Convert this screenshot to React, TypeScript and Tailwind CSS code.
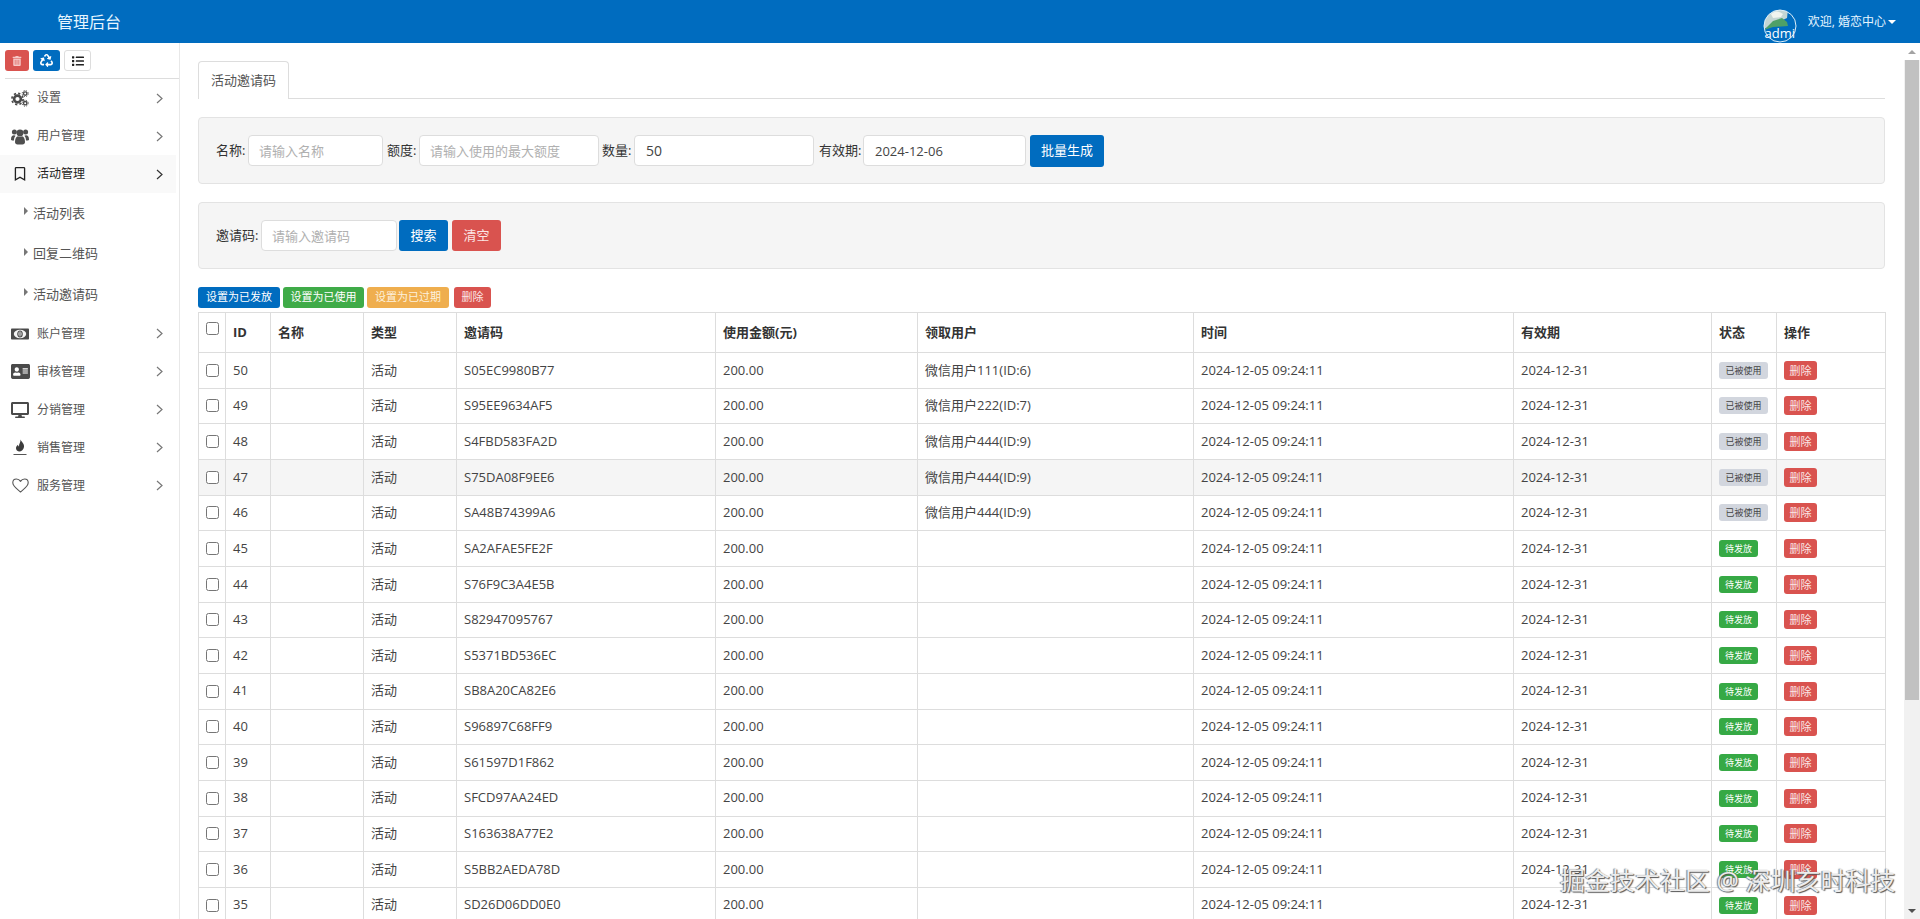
import React from "react";
import { FaRegBookmark, FaAddressCard, FaDesktop, FaTrashAlt, FaRecycle, FaList } from "react-icons/fa";

const FONT = "font-['Open_Sans','Noto_Sans_CJK_SC',sans-serif]";

type Row = [number, string, string];
const rows: Row[] = [
  [50, "S05EC9980B77", "微信用户111(ID:6)"],
  [49, "S95EE9634AF5", "微信用户222(ID:7)"],
  [48, "S4FBD583FA2D", "微信用户444(ID:9)"],
  [47, "S75DA08F9EE6", "微信用户444(ID:9)"],
  [46, "SA48B74399A6", "微信用户444(ID:9)"],
  [45, "SA2AFAE5FE2F", ""],
  [44, "S76F9C3A4E5B", ""],
  [43, "S82947095767", ""],
  [42, "S5371BD536EC", ""],
  [41, "SB8A20CA82E6", ""],
  [40, "S96897C68FF9", ""],
  [39, "S61597D1F862", ""],
  [38, "SFCD97AA24ED", ""],
  [37, "S163638A77E2", ""],
  [36, "S5BB2AEDA78D", ""],
  [35, "SD26D06DD0E0", ""],
];

function Gears() {
  return (
    <svg width="18" height="17" viewBox="0 0 18 17" fill="none" stroke="#4a4a4a">
      <circle cx="6.5" cy="9" r="3.4" strokeWidth="2.6" />
      <circle cx="6.5" cy="9" r="5.6" strokeWidth="1.7" strokeDasharray="2.2 2.2" />
      <circle cx="14.2" cy="3.6" r="1.7" strokeWidth="1.4" />
      <circle cx="14.2" cy="3.6" r="3" strokeWidth="1" strokeDasharray="1.2 1.2" />
      <circle cx="14.2" cy="13.2" r="1.7" strokeWidth="1.4" />
      <circle cx="14.2" cy="13.2" r="3" strokeWidth="1" strokeDasharray="1.2 1.2" />
    </svg>
  );
}

function Users() {
  return (
    <svg width="18" height="17" viewBox="0 0 18 17" fill="#4f4f4f">
      <circle cx="3.4" cy="4" r="2.5" />
      <circle cx="14.6" cy="4" r="2.5" />
      <circle cx="9" cy="5" r="3.4" />
      <path d="M0 11.5C0 8.5 1.2 7.2 3 7.2c.6 0 1.2.2 1.6.6C3.5 9 3 10.5 3 12.4H1.2C.5 12.4 0 12.1 0 11.5Z" />
      <path d="M18 11.5C18 8.5 16.8 7.2 15 7.2c-.6 0-1.2.2-1.6.6C14.5 9 15 10.5 15 12.4h1.8c.7 0 1.2-.3 1.2-.9Z" />
      <path d="M4 14c0-3.5 1.2-5.6 3-5.8.6.4 1.2.6 2 .6s1.400-.2 2-.6c1.800.2 3 2.300 3 5.800 0 1.500-1 2.500-2.500 2.500h-5C5 16.500 4 15.500 4 14Z" />
    </svg>
  );
}

function Money() {
  return (
    <svg width="18" height="12" viewBox="0 0 18 12">
      <rect x="0" y="0.5" width="18" height="11" rx="0.8" fill="#4a4a4a" />
      <ellipse cx="9" cy="6" rx="6.2" ry="4.2" fill="#f4f4f4" />
      <ellipse cx="9" cy="6" rx="2.2" ry="3" fill="none" stroke="#4a4a4a" strokeWidth="1.2" />
      <rect x="8.500" y="4" width="1" height="4" fill="#4a4a4a" />
    </svg>
  );
}

function Flame() {
  return (
    <svg width="14" height="17" viewBox="0 0 14 17" fill="#3c3c3c">
      <path d="M7.500 0.500C8.500 3 11.500 4.500 11 8c-.4 2.800-2.600 4.600-5 4.500C4 12.400 2.800 10.500 3 8.800c.2-1.500 1.300-2.300 2-3 .2 1 .6 1.500 1 1.700C5.600 5 7.800 3.500 7.500 .5Z" />
      <rect x="0.500" y="15" width="13" height="1" fill="#555" />
    </svg>
  );
}

function Heart() {
  return (
    <svg width="17" height="15" viewBox="0 0 17 15" fill="none" stroke="#555" strokeWidth="1.1" strokeLinejoin="round">
      <path d="M8.500 14C5 11 .8 8.400 .8 4.800.8 2.400 2.500 1 4.400 1c1.700 0 3.200.9 4.100 2.400C9.400 1.900 10.900 1 12.600 1c1.900 0 3.600 1.400 3.600 3.800C16.200 8.400 12 11 8.500 14Z" />
    </svg>
  );
}

function Chevron({ dark }: { dark?: boolean }) {
  return (
    <svg width="7" height="11" viewBox="0 0 7 11" fill="none" stroke={dark ? "#333" : "#777"} strokeWidth="1.200" className="mr-[13px]">
      <polyline points="1,1 6,5.500 1,10" />
    </svg>
  );
}

function MenuItem({ icon, label, active }: { icon: React.ReactNode; label: string; active?: boolean }) {
  return (
    <div className={`flex h-[38px] w-[176px] items-center ${active ? "bg-[#f9f9f9] text-[#222]" : "text-[#555]"}`}>
      <span className="flex w-[37px] justify-center pl-[3px] text-[#4a4a4a]">{icon}</span>
      <span className="flex-1 text-[12px]">{label}</span>
      <Chevron dark={active} />
    </div>
  );
}

function SubItem({ label }: { label: string }) {
  return (
    <div className="flex h-[40.5px] items-center pl-[24px] text-[13px] text-[#555]">
      <span className="mr-[5px] mt-[-4px] h-0 w-0 border-y-[4px] border-l-[4px] border-y-transparent border-l-[#777]" />
      {label}
    </div>
  );
}

function Field({ className, placeholder, value }: { className: string; placeholder?: string; value?: string }) {
  return (
    <input
      readOnly
      placeholder={placeholder}
      value={value}
      className={`h-[31px] rounded-[4px] border border-[#ddd] bg-white px-[10px] text-[13px] text-[#444] placeholder:text-[#b0b0b0] ${className}`}
    />
  );
}

export default function App() {
  return (
    <div className={`relative flex h-[919px] flex-col overflow-hidden bg-white text-[#333] ${FONT}`}>
      <header className="flex h-[43px] shrink-0 items-center bg-[#006cbf] pl-[57px] pr-[24px] text-white">
        <span className="text-[16px] leading-none text-[#e6f6ff]">管理后台</span>
        <div className="ml-auto flex items-center">
          <svg width="34" height="34" viewBox="0 0 34 34" className="mt-[9px]">
            <defs>
              <clipPath id="av"><circle cx="17" cy="17" r="16" /></clipPath>
            </defs>
            <g clipPath="url(#av)">
              <rect width="34" height="34" fill="#006cbf" />
              <path d="M1 20 L24 9 L25 0 L0 0 Z" fill="#c4d6d4" />
              <path d="M1 21 L10 12 L19 9 L24 13 L25 17 L10 18 Z" fill="#4fa068" />
              <path d="M8 5 Q13 0 20 5 L18 8 L10 9 Z" fill="#f1f4ef" />
            </g>
            <text x="1.500" y="29" fontSize="13" fill="#fff" fontFamily="Open Sans">admi</text>
            <circle cx="17" cy="17" r="16" fill="none" stroke="#dff0fa" strokeWidth="1" />
          </svg>
          <span className="ml-[11px] text-[12px] text-[#e6f6ff]">欢迎, 婚恋中心</span>
          <span className="ml-[2px] h-0 w-0 border-x-[4px] border-t-[4px] border-x-transparent border-t-white" />
        </div>
      </header>

      <div className="flex min-h-0 flex-1">
        <aside className="w-[180px] shrink-0 border-r border-[#e8e8e8]">
          <div className="ml-[5px] flex h-[36px] gap-[4px] border-b border-[#ddd] pt-[7px]">
            <button className="flex h-[21px] w-[24px] items-center justify-center rounded-[3px] bg-[#d9534f] text-[#f5c8c6]"><FaTrashAlt size={10} /></button>
            <button className="flex h-[21px] w-[27px] items-center justify-center rounded-[3px] bg-[#006cbf] text-white"><FaRecycle size={13} /></button>
            <button className="flex h-[21px] w-[27px] items-center justify-center rounded-[3px] border border-[#ddd] bg-white text-[#222]"><FaList size={12} /></button>
          </div>
          <MenuItem icon={<Gears />} label="设置" />
          <MenuItem icon={<Users />} label="用户管理" />
          <MenuItem icon={<FaRegBookmark size={14} className="text-[#222]" />} label="活动管理" active />
          <SubItem label="活动列表" />
          <SubItem label="回复二维码" />
          <SubItem label="活动邀请码" />
          <MenuItem icon={<Money />} label="账户管理" />
          <MenuItem icon={<FaAddressCard size={19} />} label="审核管理" />
          <MenuItem icon={<FaDesktop size={18} />} label="分销管理" />
          <MenuItem icon={<Flame />} label="销售管理" />
          <MenuItem icon={<Heart />} label="服务管理" />
        </aside>

        <main className="min-w-0 flex-1 overflow-hidden pl-[18px] pr-[19px] pt-[18px]">
          <div className="flex h-[38px] border-b border-[#ddd]">
            <div className="flex h-[38px] w-[91px] items-center justify-center rounded-t-[4px] border border-b-0 border-[#ddd] bg-white text-[13px] text-[#555]">活动邀请码</div>
          </div>

          <div className="mt-[18px] flex h-[67px] items-center rounded-[4px] border border-[#e3e3e3] bg-[#f5f5f5] pl-[17px] text-[13px]">
            <span className="w-[32px]">名称:</span>
            <Field className="w-[135px]" placeholder="请输入名称" />
            <span className="ml-[4px] w-[32px]">额度:</span>
            <Field className="w-[180px]" placeholder="请输入使用的最大额度" />
            <span className="ml-[3px] w-[32px]">数量:</span>
            <Field className="w-[180px] px-[11px] text-[14px]" value="50" />
            <span className="ml-[5px] w-[44px]">有效期:</span>
            <Field className="w-[163px] px-[11px]" value="2024-12-06" />
            <button className="ml-[4px] h-[32px] w-[74px] rounded-[3px] bg-[#006cbf] text-[13px] text-white">批量生成</button>
          </div>

          <div className="mt-[18px] flex h-[67px] items-center rounded-[4px] border border-[#e3e3e3] bg-[#f5f5f5] pl-[17px] text-[13px]">
            <span className="w-[45px]">邀请码:</span>
            <Field className="w-[136px]" placeholder="请输入邀请码" />
            <button className="ml-[2px] h-[31px] w-[49px] rounded-[3px] bg-[#006cbf] text-[13px] text-white">搜索</button>
            <button className="ml-[4px] h-[31px] w-[49px] rounded-[3px] bg-[#d9534f] text-[13px] text-[#fbe6e5]">清空</button>
          </div>

          <div className="mt-[18px] flex h-[21px] gap-[3px] text-[11px]">
            <button className="w-[82px] rounded-[3px] bg-[#006cbf] text-white">设置为已发放</button>
            <button className="w-[81px] rounded-[3px] bg-[#3fab48] text-white">设置为已使用</button>
            <button className="w-[82px] rounded-[3px] bg-[#efae4e] text-[#fdf1dd]">设置为已过期</button>
            <button className="ml-[2px] w-[37px] rounded-[3px] bg-[#d9534f] text-[#fbe6e5]">删除</button>
          </div>

          <table className="mt-[4px] w-[1687px] table-fixed border-collapse text-[13px]">
            <colgroup>
              <col className="w-[27px]" />
              <col className="w-[45px]" />
              <col className="w-[93px]" />
              <col className="w-[93px]" />
              <col className="w-[259px]" />
              <col className="w-[202px]" />
              <col className="w-[276px]" />
              <col className="w-[320px]" />
              <col className="w-[198px]" />
              <col className="w-[65px]" />
              <col className="w-[109px]" />
            </colgroup>
            <thead>
              <tr className="h-[40px]">
                <th className="border border-[#ddd] px-[7px] pb-[15px] pt-[9px] text-left align-top"><input type="checkbox" className="block" /></th>
                {["ID", "名称", "类型", "邀请码", "使用金额(元)", "领取用户", "时间", "有效期", "状态", "操作"].map((h) => (
                  <th key={h} className="border border-[#ddd] px-[7px] text-left text-[13px] font-bold">{h}</th>
                ))}
              </tr>
            </thead>
            <tbody className="text-[#444]">
              {rows.map(([id, code, user]) => (
                <tr key={id} className={`h-[35.67px] ${id === 47 ? "bg-[#f5f5f5]" : ""}`}>
                  <td className="border border-[#ddd] px-[7px]"><input type="checkbox" className="block" /></td>
                  <td className="border border-[#ddd] px-[7px]">{id}</td>
                  <td className="border border-[#ddd] px-[8px]"></td>
                  <td className="border border-[#ddd] px-[7px]">活动</td>
                  <td className="border border-[#ddd] px-[7px]">{code}</td>
                  <td className="border border-[#ddd] px-[7px]">200.00</td>
                  <td className="border border-[#ddd] px-[7px]">{user}</td>
                  <td className="border border-[#ddd] px-[7px]">2024-12-05 09:24:11</td>
                  <td className="border border-[#ddd] px-[7px]">2024-12-31</td>
                  <td className="border border-[#ddd] px-[7px]">
                    {user ? (
                      <span className="block h-[17px] w-[49px] rounded-[3px] bg-[#d2d6de] text-center text-[9px] leading-[17px] text-[#444]">已被使用</span>
                    ) : (
                      <span className="block h-[17px] w-[39px] rounded-[3px] bg-[#36a945] text-center text-[9px] leading-[17px] text-white">待发放</span>
                    )}
                  </td>
                  <td className="border border-[#ddd] px-[7px]">
                    <button className="block h-[19px] w-[33px] rounded-[3px] bg-[#d9534f] text-[11px] leading-[19px] text-[#fbe6e5]">删除</button>
                  </td>
                </tr>
              ))}
            </tbody>
          </table>
        </main>

        <div className="flex w-[16px] shrink-0 flex-col items-center bg-[#f1f1f1]">
          <div className="flex h-[17px] w-full items-center justify-center bg-white">
            <span className="h-0 w-0 border-x-[4px] border-b-[4px] border-x-transparent border-b-[#a3a3a3]" />
          </div>
          <div className="h-[640px] w-[14px] bg-[#c1c1c1]" />
          <div className="mt-auto flex h-[17px] items-center justify-center">
            <span className="h-0 w-0 border-x-[4px] border-t-[4px] border-x-transparent border-t-[#505050]" />
          </div>
        </div>
      </div>

      <div className="absolute left-[1560px] top-[864px] whitespace-nowrap text-[25px] leading-[32px] text-[#ececec] [text-shadow:1px_1px_1px_#555,-1px_0_1px_#777]">
        掘金技术社区 @ 深圳亥时科技
      </div>
    </div>
  );
}
